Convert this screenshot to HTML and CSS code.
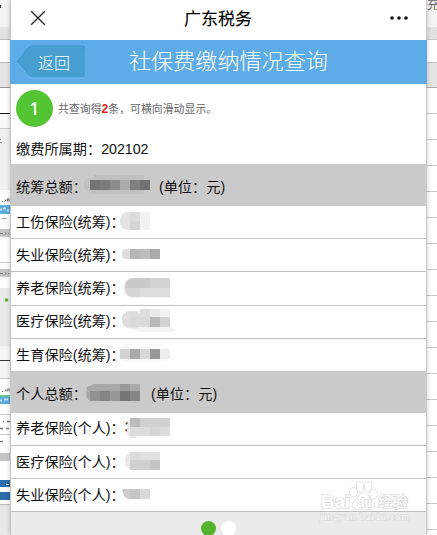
FILE: index.html
```html
<!DOCTYPE html>
<html lang="zh-CN">
<head>
    <meta charset="UTF-8">
    <meta name="viewport" content="width=device-width, initial-scale=1.0">
    <title>广东税务</title>
    <link rel="stylesheet" href="styles.css">
</head>
<body>
    <div class="page">
        <div class="side side-left">
            <svg width="11" height="535">
                <rect width="11" height="27" fill="#f4f4f4"/>
                <rect y="5" width="1" height="3" fill="#333"/>
                <rect y="27" width="11" height="12" fill="#e3e3e3"/>
                <rect y="39" width="11" height="1" fill="#bbb"/>
                <rect y="62" width="11" height="25" fill="#e5e5e5"/>
                <rect y="62" width="11" height="1" fill="#bbb"/>
                <rect y="87" width="11" height="1" fill="#999"/>
                <rect y="113" width="11" height="1" fill="#111"/>
                <rect y="114" width="11" height="14" fill="#f8f8f8"/>
                <rect y="128" width="11" height="62" fill="#f1f1f1"/>
                <rect y="128" width="11" height="1" fill="#ccc"/>
                <path d="M0 139.500h1M0 142.500h2" stroke="#888"/>
                <path d="M2 201.500h1M5 201.500l1-2M7 201.500l1-3M9 201.500v-3" stroke="#555"/>
                <rect y="205" width="11" height="9" fill="#5caae0"/>
                <path d="M0 209.500h2M3 208.500h3M7 210.500h2" stroke="#c6e3f7" stroke-width="2"/>
                <path d="M2 218.500h5" stroke="#aaa"/>
                <rect y="229" width="11" height="8" fill="#c6c6c6"/>
                <path d="M0 233.500h3M5 234.500l1-2M8 233.500h1" stroke="#777"/>
                <rect y="262" width="11" height="1" fill="#ccc"/>
                <rect y="269" width="11" height="8" fill="#c6c6c6"/>
                <path d="M0 273.500h3M5 274.500l1-2M8 273.500h1" stroke="#777"/>
                <rect y="288" width="11" height="58" fill="#ebebeb"/>
                <circle cx="6.500" cy="300" r="1.800" fill="#55b62b"/>
                <rect y="346" width="11" height="14" fill="#f6f6f6"/>
                <rect y="360" width="11" height="1" fill="#333"/>
                <rect y="361" width="11" height="17" fill="#f5f5f5"/>
                <rect y="378" width="11" height="1" fill="#ccc"/>
                <path d="M2 391.500h1M5 391.500l1-2M7 391.500l1-3M9 391.500v-3" stroke="#666"/>
                <rect y="395" width="11" height="2" fill="#6bc69a"/>
                <rect y="397" width="11" height="7" fill="#5caae0"/>
                <path d="M0 400.500h2M4 399.500h4" stroke="#c6e3f7" stroke-width="2"/>
                <rect y="414" width="11" height="1" fill="#ccc"/>
                <path d="M3 421.500h1M7 421.500h3M0 428.500h3M6 428.500h3M0 441.500h3" stroke="#777" stroke-width="1.500"/>
                <rect y="434" width="11" height="1" fill="#ccc"/>
                <rect y="453" width="11" height="8" fill="#c6c6c6"/>
                <rect y="480" width="11" height="7" fill="#2c6bac"/>
                <path d="M6 484.500h3" stroke="#fff"/>
                <rect y="492" width="11" height="8" fill="#2c6bac"/>
                <rect y="504" width="11" height="31" fill="#e8e8e8"/>
                <rect y="504" width="11" height="1" fill="#bbb"/>
            </svg>
        </div>

        <div class="panel">
            <header class="topbar">
                <svg class="close" width="16" height="16" viewBox="0 0 16 16"><path d="M1.200 1.200l13.600 13.600M14.800 1.200L1.200 14.800"/></svg>
                <span class="app-name">广东税务</span>
                <svg class="more" width="18" height="4" viewBox="0 0 18 4"><circle cx="2" cy="2" r="1.800"/><circle cx="9" cy="2" r="1.800"/><circle cx="16" cy="2" r="1.800"/></svg>
            </header>

            <div class="titlebar">
                <div class="back">
                    <svg class="back-shape" width="71" height="34" viewBox="0 0 71 34">
                        <path d="M0 18L12 32Q14 34 17 34H66" fill="none" stroke="#74bdee"/>
                        <path d="M0 17L11 3Q13 1 16 1H65Q68 1 68 4V29Q68 32 65 32H16Q13 32 11 30Z" fill="#469fd0"/>
                        <path d="M0 17L11 3Q13 1 16 1H65Q68 1 68 4" fill="none" stroke="#3f95cb"/>
                    </svg>
                    <span class="back-label">返回</span>
                </div>
                <h1>社保费缴纳情况查询</h1>
            </div>

            <div class="summary">
                <span class="badge">1</span>
                <span class="hint">共查询得<b>2</b>条，可横向滑动显示。</span>
            </div>

            <div class="period">缴费所属期：202102</div>
            <div class="total">
                <span>统筹总额：</span>
                <svg class="mask total-mask" width="70" height="22">
                    <path d="M4 3h20v16H6l-6-5V6z" fill="#c2c2c2"/><rect x="10" y="0" width="50" height="19" fill="#c0c0c0"/>
                    <rect x="6" y="5" width="10" height="10" fill="#747474"/><rect x="16" y="5" width="10" height="10" fill="#7c7c7c"/><rect x="26" y="5" width="10" height="10" fill="#8c8c8c"/><rect x="36" y="5" width="10" height="10" fill="#ababab"/><rect x="46" y="5" width="10" height="10" fill="#808080"/><rect x="56" y="5" width="10" height="10" fill="#717171"/>
                </svg>
                <span class="unit">(单位：元)</span>
            </div>
            <div class="row"><span>工伤保险(统筹)：</span>
                <svg class="mask" width="60" height="24"><rect x="0" y="3" width="20" height="18" rx="8" fill="#e4e4e4"/><rect x="10" y="3" width="10" height="9" fill="#ddd"/><rect x="10" y="12" width="10" height="9" fill="#d5d5d5"/><rect x="20" y="3" width="10" height="18" fill="#f2f2f2"/></svg>
            </div>
            <div class="row"><span>失业保险(统筹)：</span>
                <svg class="mask" width="60" height="24"><rect x="2" y="7" width="14" height="10" rx="4" fill="#ddd"/><rect x="10" y="7" width="10" height="10" fill="#b7b7b7"/><rect x="20" y="7" width="10" height="10" fill="#bdbdbd"/><rect x="30" y="7" width="10" height="10" fill="#aaa"/></svg>
            </div>
            <div class="row"><span>养老保险(统筹)：</span>
                <svg class="mask" width="60" height="24"><path d="M4 8L10 3H50V21L56 23H12Q3 22 3 14z" fill="#f2f2f2"/><path d="M5 11q1-8 9-8h6v10H5z" fill="#c9c9c9"/><rect x="20" y="3" width="10" height="10" fill="#cacaca"/><rect x="30" y="3" width="20" height="10" fill="#d3d3d3"/><path d="M5 13h15v9h-9q-6-2-6-9z" fill="#d6d6d6"/><rect x="20" y="13" width="30" height="9" fill="#ddd"/></svg>
            </div>
            <div class="row"><span>医疗保险(统筹)：</span>
                <svg class="mask" width="60" height="24"><path d="M2 10Q6 3 20 3l10-2h20v19l6 1q-1 3-8 3H20L2 18z" fill="#f2f2f2"/><rect x="2" y="3" width="20" height="17" rx="8" fill="#ddd"/><rect x="20" y="1" width="10" height="8" fill="#dedede"/><rect x="30" y="1" width="10" height="8" fill="#e8e8e8"/><rect x="10" y="9" width="20" height="10" fill="#dadada"/><rect x="30" y="9" width="10" height="10" fill="#b9b9b9"/><rect x="40" y="9" width="10" height="10" fill="#d2d2d2"/></svg>
            </div>
            <div class="row row-last"><span>生育保险(统筹)：</span>
                <svg class="mask" width="60" height="24"><rect x="0" y="2" width="50" height="18" rx="7" fill="#fafafa"/><rect x="0" y="7" width="10" height="10" fill="#d3d3d3"/><rect x="10" y="7" width="10" height="10" fill="#aaa"/><rect x="20" y="7" width="10" height="10" fill="#d7d7d7"/><rect x="30" y="7" width="10" height="10" fill="#999"/><rect x="40" y="7" width="10" height="10" fill="#ededed"/></svg>
            </div>

            <div class="total">
                <span>个人总额：</span>
                <svg class="mask total-mask" width="62" height="22">
                    <path d="M3 5L10 2H56V19H8Q2 18 2 12z" fill="#a9a9a9"/><rect x="6" y="9" width="10" height="10" fill="#929292"/><rect x="16" y="9" width="10" height="10" fill="#858585"/><rect x="26" y="9" width="10" height="10" fill="#989898"/><rect x="36" y="2" width="10" height="7" fill="#999"/><rect x="36" y="9" width="10" height="10" fill="#777"/><rect x="46" y="9" width="10" height="10" fill="#868686"/>
                </svg>
                <span class="unit">(单位：元)</span>
            </div>
            <div class="row"><span>养老保险(个人)：</span><span class="amount">3</span>
                <svg class="mask mask-over" width="60" height="24"><path d="M3 12q0-9 9-9v20H6q-4-3-3-11z" fill="#e9e9e9"/><rect x="6" y="3" width="10" height="9" fill="#bcbcbc"/><rect x="16" y="3" width="30" height="9" fill="#d0d0d0"/><rect x="6" y="12" width="20" height="9" fill="#dcdcdc"/><rect x="26" y="12" width="10" height="9" fill="#d5d5d5"/><rect x="36" y="12" width="10" height="9" fill="#dedede"/></svg>
            </div>
            <div class="row"><span>医疗保险(个人)：</span><span class="amount">1</span>
                <svg class="mask mask-over" width="60" height="24"><rect x="1" y="3" width="24" height="18" rx="8" fill="#e9e9e9"/><rect x="6" y="3" width="10" height="8" fill="#ddd"/><rect x="16" y="3" width="20" height="8" fill="#e0e0e0"/><rect x="6" y="11" width="20" height="10" fill="#d0d0d0"/><rect x="26" y="11" width="10" height="10" fill="#c5c5c5"/></svg>
            </div>
            <div class="row"><span>失业保险(个人)：</span>
                <svg class="mask" width="60" height="24"><path d="M2 7H14V17H8Q3 15 2 7z" fill="#ccc"/><rect x="10" y="7" width="10" height="10" fill="#c5c5c5"/><rect x="20" y="7" width="10" height="10" fill="#d9d9d9"/></svg>
            </div>

            <footer class="pager">
                <i class="dot active"></i>
                <i class="dot"></i>
            </footer>
        </div>

        <div class="side side-right">
            <div class="toolbar">充</div>
            <div class="toolbar-edge"></div>
            <div class="formula"></div>
            <div class="col-head"></div>
            <div class="cells"></div>
        </div>
    </div>

    <svg class="watermark" width="94" height="46" viewBox="0 0 94 46">
        <g class="mark">
            <text x="2" y="28" font-size="19" font-weight="bold" textLength="29">Bai</text>
            <ellipse cx="34.500" cy="12" rx="3.400" ry="4.500"/>
            <ellipse cx="41" cy="6.500" rx="3.400" ry="4.800"/>
            <ellipse cx="49" cy="6.500" rx="3.400" ry="4.800"/>
            <ellipse cx="54.500" cy="14" rx="3.400" ry="4.500"/>
            <path d="M44.500 13c5 0 5 5 8.500 8 6 6 0 8-3 8H39c-4 0-8-4-3-8 4-3 4-8 8.500-8z"/>
            <text x="38" y="27" font-size="12" font-weight="bold">du</text>
            <text x="59" y="27" font-size="15">经验</text>
        </g>
        <text class="site" x="1" y="40" textLength="89">jingyan.baidu.com</text>
    </svg>
</body>
</html>
```
FILE: styles.css
```css
body {
    margin: 0;
    background: #fff;
    color: #222;
    font-family: "Liberation Sans", "Noto Sans CJK SC", sans-serif;
    overflow: hidden;
}
.page {
    display: flex;
    width: 437px;
    height: 535px;
}
.side {
    overflow: hidden;
}
.side-left {
    width: 10px;
    flex: none;
}
.side svg {
    display: block;
}
.panel {
    width: 417px;
    flex: none;
    display: flex;
    flex-direction: column;
    box-sizing: border-box;
    background: #fff;
    border-left: 1px solid #c4c4c4;
    border-right: 1px solid #c8c8c8;
    box-shadow: 0 0 5px rgba(0, 0, 0, 0.2);
    z-index: 1;
}
.panel > * {
    flex-shrink: 0;
}
.topbar {
    height: 40px;
    display: flex;
    align-items: center;
    justify-content: space-between;
    padding: 0 18px 5px 19px;
    box-sizing: border-box;
}
.close {
    stroke: #222;
    stroke-width: 1.3;
}
.app-name {
    font-size: 17px;
    color: #000;
    -webkit-text-stroke: 0.1px #000;
}
.more {
    fill: #111;
}
.titlebar {
    height: 44px;
    display: flex;
    align-items: center;
    background: #5dabe7;
    color: #fff;
    margin: 0 -1px;
    padding-left: 7px;
}
.back {
    display: grid;
    align-items: center;
    width: 71px;
    height: 34px;
}
.back-shape, .back-label {
    grid-area: 1 / 1;
}
.back-label {
    padding-left: 21px;
    font-size: 16px;
    font-weight: 300;
}
h1 {
    margin: 0 0 0 41px;
    font-size: 22.100px;
    font-weight: 300;
    line-height: 44px;
}
.summary {
    height: 48px;
    display: flex;
    align-items: center;
    padding-left: 5px;
}
.badge {
    width: 37px;
    height: 37px;
    border-radius: 50%;
    background: #53c532;
    color: #fff;
    font-family: "Noto Sans", sans-serif;
    font-size: 18px;
    font-weight: 500;
    line-height: 37px;
    text-align: center;
}
.hint {
    margin-left: 5px;
    font-size: 10.900px;
    color: #666;
}
.hint b {
    color: #e02020;
    font-size: 12px;
}
.period, .row, .total {
    display: flex;
    align-items: center;
    box-sizing: border-box;
    padding-left: 5px;
    font-size: 14.200px;
    white-space: nowrap;
    color: #111;
}
.period {
    height: 32px;
}
.total {
    height: 41.700px;
    background: #cacaca;
    margin: 0 -1px;
    padding: 3px 0 0 6px;
}
.total-mask {
    margin-left: -3px;
}
.unit {
    margin-left: 5px;
}
.row {
    height: 33.300px;
    padding-bottom: 2.500px;
    border-bottom: 1px solid #bfbfbf;
}
.row-last {
    border-bottom: none;
    height: 32px;
}
.mask {
    flex: none;
}
.row .mask {
    margin-left: -5px;
}
.row .mask-over {
    margin-left: -9px;
    z-index: 1;
}
.pager {
    height: 24px;
    box-sizing: border-box;
    display: flex;
    justify-content: center;
    align-items: flex-start;
    gap: 5px;
    padding-top: 9px;
    background: #ebebeb;
}
.dot {
    width: 15px;
    height: 15px;
    border-radius: 50%;
    background: #fff;
}
.dot.active {
    background: #53b32c;
}
.side-right {
    flex: 1;
    display: flex;
    flex-direction: column;
}
.toolbar {
    height: 27px;
    background: #f5f5f5;
    color: #666;
    font-size: 12px;
    line-height: 10px;
}
.toolbar-edge {
    height: 12px;
    background: #e2e2e2;
    border-bottom: 1px solid #c8c8c8;
}
.formula {
    height: 22px;
    border-bottom: 1px solid #c0c0c0;
}
.col-head {
    height: 24px;
    background: #e5e5e5;
    border-bottom: 1px solid #aaa;
}
.cells {
    flex: 1;
    background: repeating-linear-gradient(#fff 0 25px, #c9c9c9 25px 26px);
}
.watermark {
    position: absolute;
    left: 319px;
    top: 480px;
    z-index: 2;
}
.watermark .mark {
    fill: #fff;
    stroke: #dedede;
    stroke-width: 1.6;
    paint-order: stroke;
}
.watermark .site {
    fill: #f7f7f7;
    stroke: #d9d9d9;
    stroke-width: 1;
    paint-order: stroke;
    font-family: "Liberation Serif", serif;
    font-size: 10px;
}
```
